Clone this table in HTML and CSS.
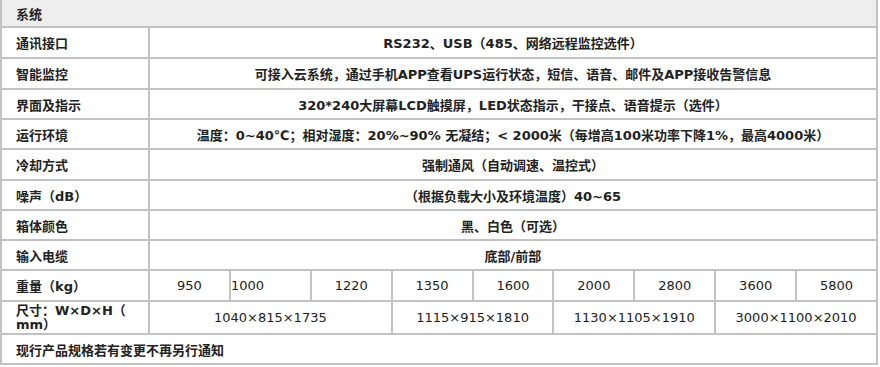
FILE: index.html
```html
<!DOCTYPE html>
<html lang="zh-CN">
<head>
<meta charset="utf-8">
<title>系统</title>
<link rel="stylesheet" href="styles.css">
</head>
<body>
<div class="spec">
  <div class="cell head full">系统</div>

  <div class="cell label">通讯接口</div>
  <div class="cell value wide">RS232、USB（485、网络远程监控选件）</div>

  <div class="cell label">智能监控</div>
  <div class="cell value wide">可接入云系统，通过手机APP查看UPS运行状态，短信、语音、邮件及APP接收告警信息</div>

  <div class="cell label">界面及指示</div>
  <div class="cell value wide">320*240大屏幕LCD触摸屏，LED状态指示，干接点、语音提示（选件）</div>

  <div class="cell label">运行环境</div>
  <div class="cell value wide">温度：0~40℃；相对湿度：20%~90% 无凝结；&lt; 2000米（每增高100米功率下降1%，最高4000米）</div>

  <div class="cell label">冷却方式</div>
  <div class="cell value wide">强制通风（自动调速、温控式）</div>

  <div class="cell label">噪声（dB）</div>
  <div class="cell value wide">（根据负载大小及环境温度）40~65</div>

  <div class="cell label">箱体颜色</div>
  <div class="cell value wide">黑、白色（可选）</div>

  <div class="cell label">输入电缆</div>
  <div class="cell value wide">底部/前部</div>

  <div class="cell label">重量（kg）</div>
  <div class="cell value num">950</div>
  <div class="cell value num left">1000</div>
  <div class="cell value num">1220</div>
  <div class="cell value num">1350</div>
  <div class="cell value num">1600</div>
  <div class="cell value num">2000</div>
  <div class="cell value num">2800</div>
  <div class="cell value num">3600</div>
  <div class="cell value num">5800</div>

  <div class="cell label two">尺寸：W×D×H（<br>mm）</div>
  <div class="cell value num span3">1040×815×1735</div>
  <div class="cell value num span2">1115×915×1810</div>
  <div class="cell value num span2">1130×1105×1910</div>
  <div class="cell value num span2">3000×1100×2010</div>

  <div class="cell label full">现行产品规格若有变更不再另行通知</div>
</div>
</body>
</html>
```
FILE: styles.css
```css
html, body {
  margin: 0;
  padding: 0;
  background: #ffffff;
}

.spec {
  width: 878px;
  box-sizing: border-box;
  display: grid;
  grid-template-columns: 146px repeat(9, 1fr);
  grid-template-rows: 26px 29px 29px 28px 28px 29px 28px 28px 28px 29px 31px 28px;
  gap: 2px;
  padding: 0 2px 2px 2px;
  background: #c2c2c2;
  font-family: "DejaVu Sans", "Noto Sans CJK SC", sans-serif;
  font-size: 13px;
  font-weight: 700;
  color: #222222;
}

.cell {
  background: #ffffff;
  display: flex;
  align-items: center;
  white-space: nowrap;
  overflow: hidden;
}

.head {
  background: #eeeeee;
  padding-left: 14px;
}

.full {
  grid-column: 1 / -1;
}

.label {
  padding-left: 14px;
}

.label.two {
  line-height: 14px;
  white-space: normal;
}

.value {
  justify-content: center;
}

.wide {
  grid-column: 2 / -1;
}

.num {
  font-weight: 400;
}

.left {
  justify-content: flex-start;
}

.span3 {
  grid-column: span 3;
}

.span2 {
  grid-column: span 2;
}
```
